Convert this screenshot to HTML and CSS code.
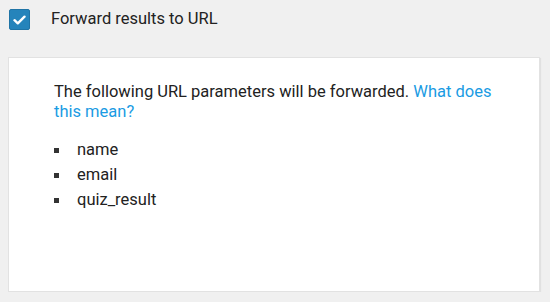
FILE: index.html
```html
<!DOCTYPE html>
<html>
<head>
<meta charset="utf-8">
<link rel="stylesheet" href="styles.css">
</head>
<body>
<div class="page">
  <label class="toggle">
    <span class="check">
      <svg width="13" height="10" viewBox="0 0 13 10"><path d="M1.5 5.2 L4.8 8.3 L11.5 1.7" fill="none" stroke="#fff" stroke-width="2.4" stroke-linecap="round" stroke-linejoin="round"/></svg>
    </span>
    <span class="toggle-label">Forward results to URL</span>
  </label>
  <div class="panel">
    <p class="intro">The following URL parameters will be forwarded. <a class="link" href="#">What does this mean?</a></p>
    <ul class="params">
      <li>name</li>
      <li>email</li>
      <li>quiz_result</li>
    </ul>
  </div>
</div>
</body>
</html>
```

FILE: styles.css
```css
html, body {
  margin: 0;
  padding: 0;
  background: #f0f0f0;
}
body {
  font-family: Roboto, "Liberation Sans", sans-serif;
  color: #222;
}
.page {
  padding: 9px 10px 0 8px;
}
.toggle {
  display: flex;
  align-items: center;
  height: 21px;
  margin-left: 1px;
}
.check {
  width: 21px;
  height: 21px;
  border-radius: 2px;
  background: #2584bb;
  display: flex;
  align-items: center;
  justify-content: center;
  box-sizing: border-box;
  border: 1px solid #1f74a6;
}
.toggle-label {
  margin-left: 21px;
  font-size: 16.5px;
  color: #222;
  position: relative;
  top: -1px;
}
.panel {
  margin-top: 27px;
  background: #fff;
  border: 1px solid #e2e2e2;
  box-shadow: 1px 1px 1px rgba(0,0,0,0.06);
  height: 235px;
  box-sizing: border-box;
  padding: 24px 30px 0 45px;
}
.intro {
  margin: 0;
  font-size: 16.5px;
  line-height: 20px;
}
.link {
  color: #1a9be3;
  text-decoration: none;
}
.params {
  list-style: none;
  margin: 15px 0 0 0;
  padding: 0;
  font-size: 16.5px;
  line-height: 25px;
}
.params li {
  display: flex;
  align-items: center;
}
.params li::before {
  content: "";
  width: 5px;
  height: 5px;
  background: #333;
  margin-right: 18px;
  margin-top: 1px;
  flex: none;
}
```
